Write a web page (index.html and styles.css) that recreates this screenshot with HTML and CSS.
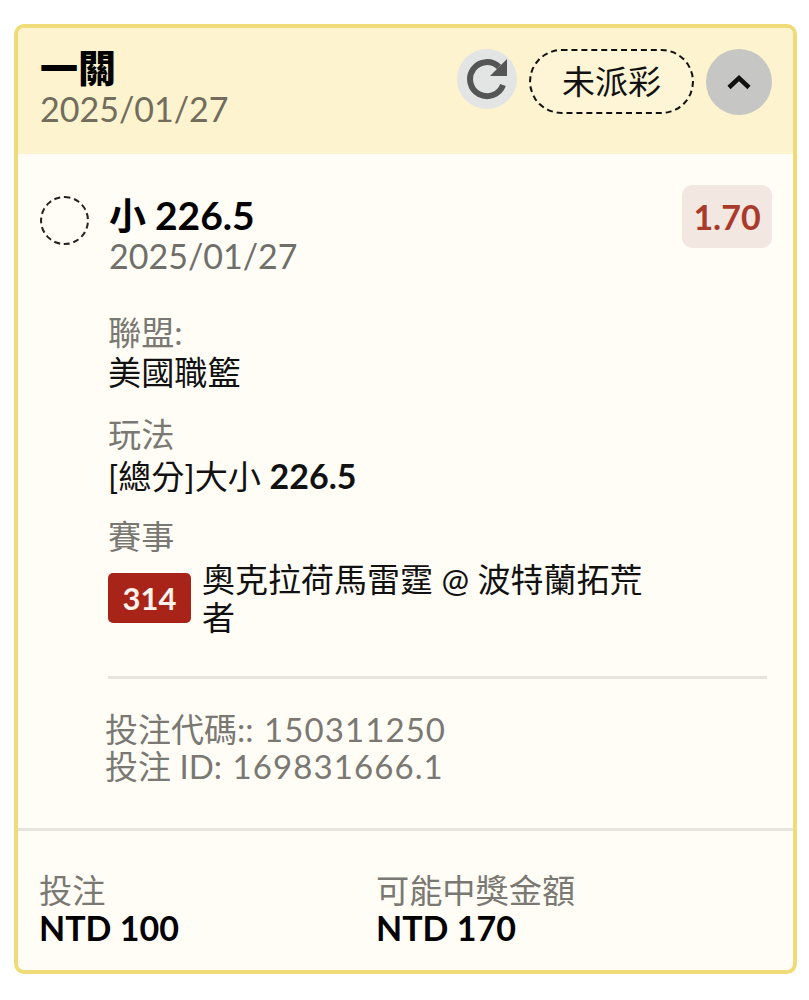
FILE: index.html
```html
<!DOCTYPE html>
<html lang="zh-Hant">
<head>
<meta charset="utf-8">
<title>一關</title>
<link rel="stylesheet" href="styles.css">
</head>
<body>
<main class="card">
  <header class="head">
    <div class="head-title">
      <div class="title">一關</div>
      <div class="date">2025/01/27</div>
    </div>
    <div class="head-actions">
      <button class="refresh" aria-label="refresh">
        <svg width="44" height="44" viewBox="0 0 44 44"><path d="M34 10A17 17 0 1 0 38 28" fill="none" stroke="#555" stroke-width="6"/><path d="M42 2V19H25z" fill="#555"/></svg>
      </button>
      <div class="status">未派彩</div>
      <button class="toggle" aria-label="collapse">
        <svg width="26" height="18" viewBox="0 0 26 18"><path d="M3 14.500L13 5l10 9.500" fill="none" stroke="#111" stroke-width="4.500"/></svg>
      </button>
    </div>
  </header>
  <section class="body">
    <div class="selection">
      <span class="radio"></span>
      <div class="sel-main">
        <div class="sel-name">小 <span class="sel-num">226.5</span></div>
        <div class="date">2025/01/27</div>
      </div>
      <div class="odds">1.70</div>
    </div>
    <div class="details">
      <div class="field">
        <div class="label">聯盟:</div>
        <div class="value">美國職籃</div>
      </div>
      <div class="field">
        <div class="label">玩法</div>
        <div class="value value-bet">[總分]大小 <b class="val-num">226.5</b></div>
      </div>
      <div class="field">
        <div class="label">賽事</div>
        <div class="event">
          <span class="code">314</span>
          <span class="event-name">奧克拉荷馬雷霆 @ 波特蘭拓荒者</span>
        </div>
      </div>
      <div class="ids">
        <div>投注代碼:: <span class="id-num">150311250</span></div>
        <div>投注 ID: <span class="id-num">169831666.1</span></div>
      </div>
    </div>
  </section>
  <footer class="foot">
    <div class="foot-col stake">
      <div class="label">投注</div>
      <div class="amount">NTD 100</div>
    </div>
    <div class="foot-col">
      <div class="label">可能中獎金額</div>
      <div class="amount">NTD 170</div>
    </div>
  </footer>
</main>
</body>
</html>
```
FILE: styles.css
```css
* { box-sizing: border-box; }
html, body { margin: 0; background: #fff; }
body {
  padding: 24px 12px 26px 14px;
  font-family: Lato, "Noto Sans CJK TC", sans-serif;
  color: #111;
}
.card {
  height: 950px;
  display: flex;
  flex-direction: column;
  background: #fffdf6;
  border: 4px solid #efdc78;
  border-radius: 10px;
  overflow: hidden;
}
.head {
  height: 126px;
  flex: none;
  display: flex;
  justify-content: space-between;
  background: #fdf3ce;
  padding: 18px 21px 0 22px;
}
.title {
  font-size: 38px;
  font-weight: 900;
  line-height: 42px;
  color: #000;
}
.date {
  font-size: 34px;
  line-height: 38px;
  color: #6f6f6a;
}
.head .date { color: #716c5c; margin-top: 2px; }
.head-actions {
  display: flex;
  align-items: flex-start;
  gap: 12px;
  margin-top: 3px;
}
.refresh, .toggle {
  border: 0;
  padding: 0;
  border-radius: 50%;
  display: flex;
  align-items: center;
  justify-content: center;
}
.refresh {
  width: 60px;
  height: 60px;
  background: #e3e4e4;
}
.status {
  width: 165px;
  height: 65px;
  border: 2px dashed #111;
  border-radius: 33px;
  background: #fdf5d6;
  font-size: 33px;
  line-height: 61px;
  text-align: center;
}
.toggle {
  width: 66px;
  height: 66px;
  background: #c6c6c4;
}
.body {
  flex: 1;
  padding: 30px 26px 0 22px;
}
.selection {
  display: flex;
  align-items: flex-start;
}
.radio {
  width: 49px;
  height: 49px;
  flex: none;
  margin-top: 12px;
  margin-right: 20px;
  border: 2px dashed #222;
  border-radius: 50%;
}
.sel-main { flex: 1; margin-top: 7px; }
.sel-name {
  font-size: 37px;
  font-weight: 700;
  line-height: 48px;
  color: #000;
}
.sel-num { font-size: 39px; }
.sel-main .date { margin-top: -3px; }
.odds {
  width: 90px;
  height: 63px;
  margin: 1px -5px 0 0;
  background: #f3e8e1;
  border-radius: 10px;
  color: #a83b2c;
  font-size: 34px;
  font-weight: 700;
  line-height: 63px;
  text-align: center;
}
.details {
  margin-left: 68px;
  padding-top: 38px;
}
.field { margin-bottom: 24px; }
.label {
  font-size: 33.200px;
  line-height: 38px;
  color: #7a7873;
}
.value {
  font-size: 33.200px;
  line-height: 38px;
  margin-top: 2px;
  color: #111;
}
.value-bet { margin-top: 4px; margin-bottom: -2px; }
.val-num { font-size: 34px; font-weight: 700; }
.event {
  display: flex;
  align-items: center;
  gap: 11px;
  margin-top: 5px;
}
.code {
  flex: none;
  width: 83px;
  height: 50px;
  background: #a82419;
  border-radius: 5px;
  color: #fff3ec;
  font-size: 31px;
  font-weight: 700;
  line-height: 50px;
  text-align: center;
}
.event-name {
  width: 450px;
  font-size: 33px;
  line-height: 38px;
  color: #111;
}
.ids {
  width: 659px;
  margin-top: 40px;
  padding-top: 32px;
  border-top: 3px solid #e6e4de;
  font-size: 33px;
  line-height: 37px;
  color: #7a7873;
  text-indent: -3px;
}
.id-num { letter-spacing: 1.100px; margin-left: 2px; }
.foot {
  height: 142px;
  flex: none;
  display: flex;
  border-top: 3px solid #e6e4de;
  padding: 40px 21px 0 21px;
}
.foot-col { flex: none; }
.stake { width: 337px; }
.amount {
  font-size: 34px;
  font-weight: 700;
  line-height: 37px;
  color: #000;
}
```
